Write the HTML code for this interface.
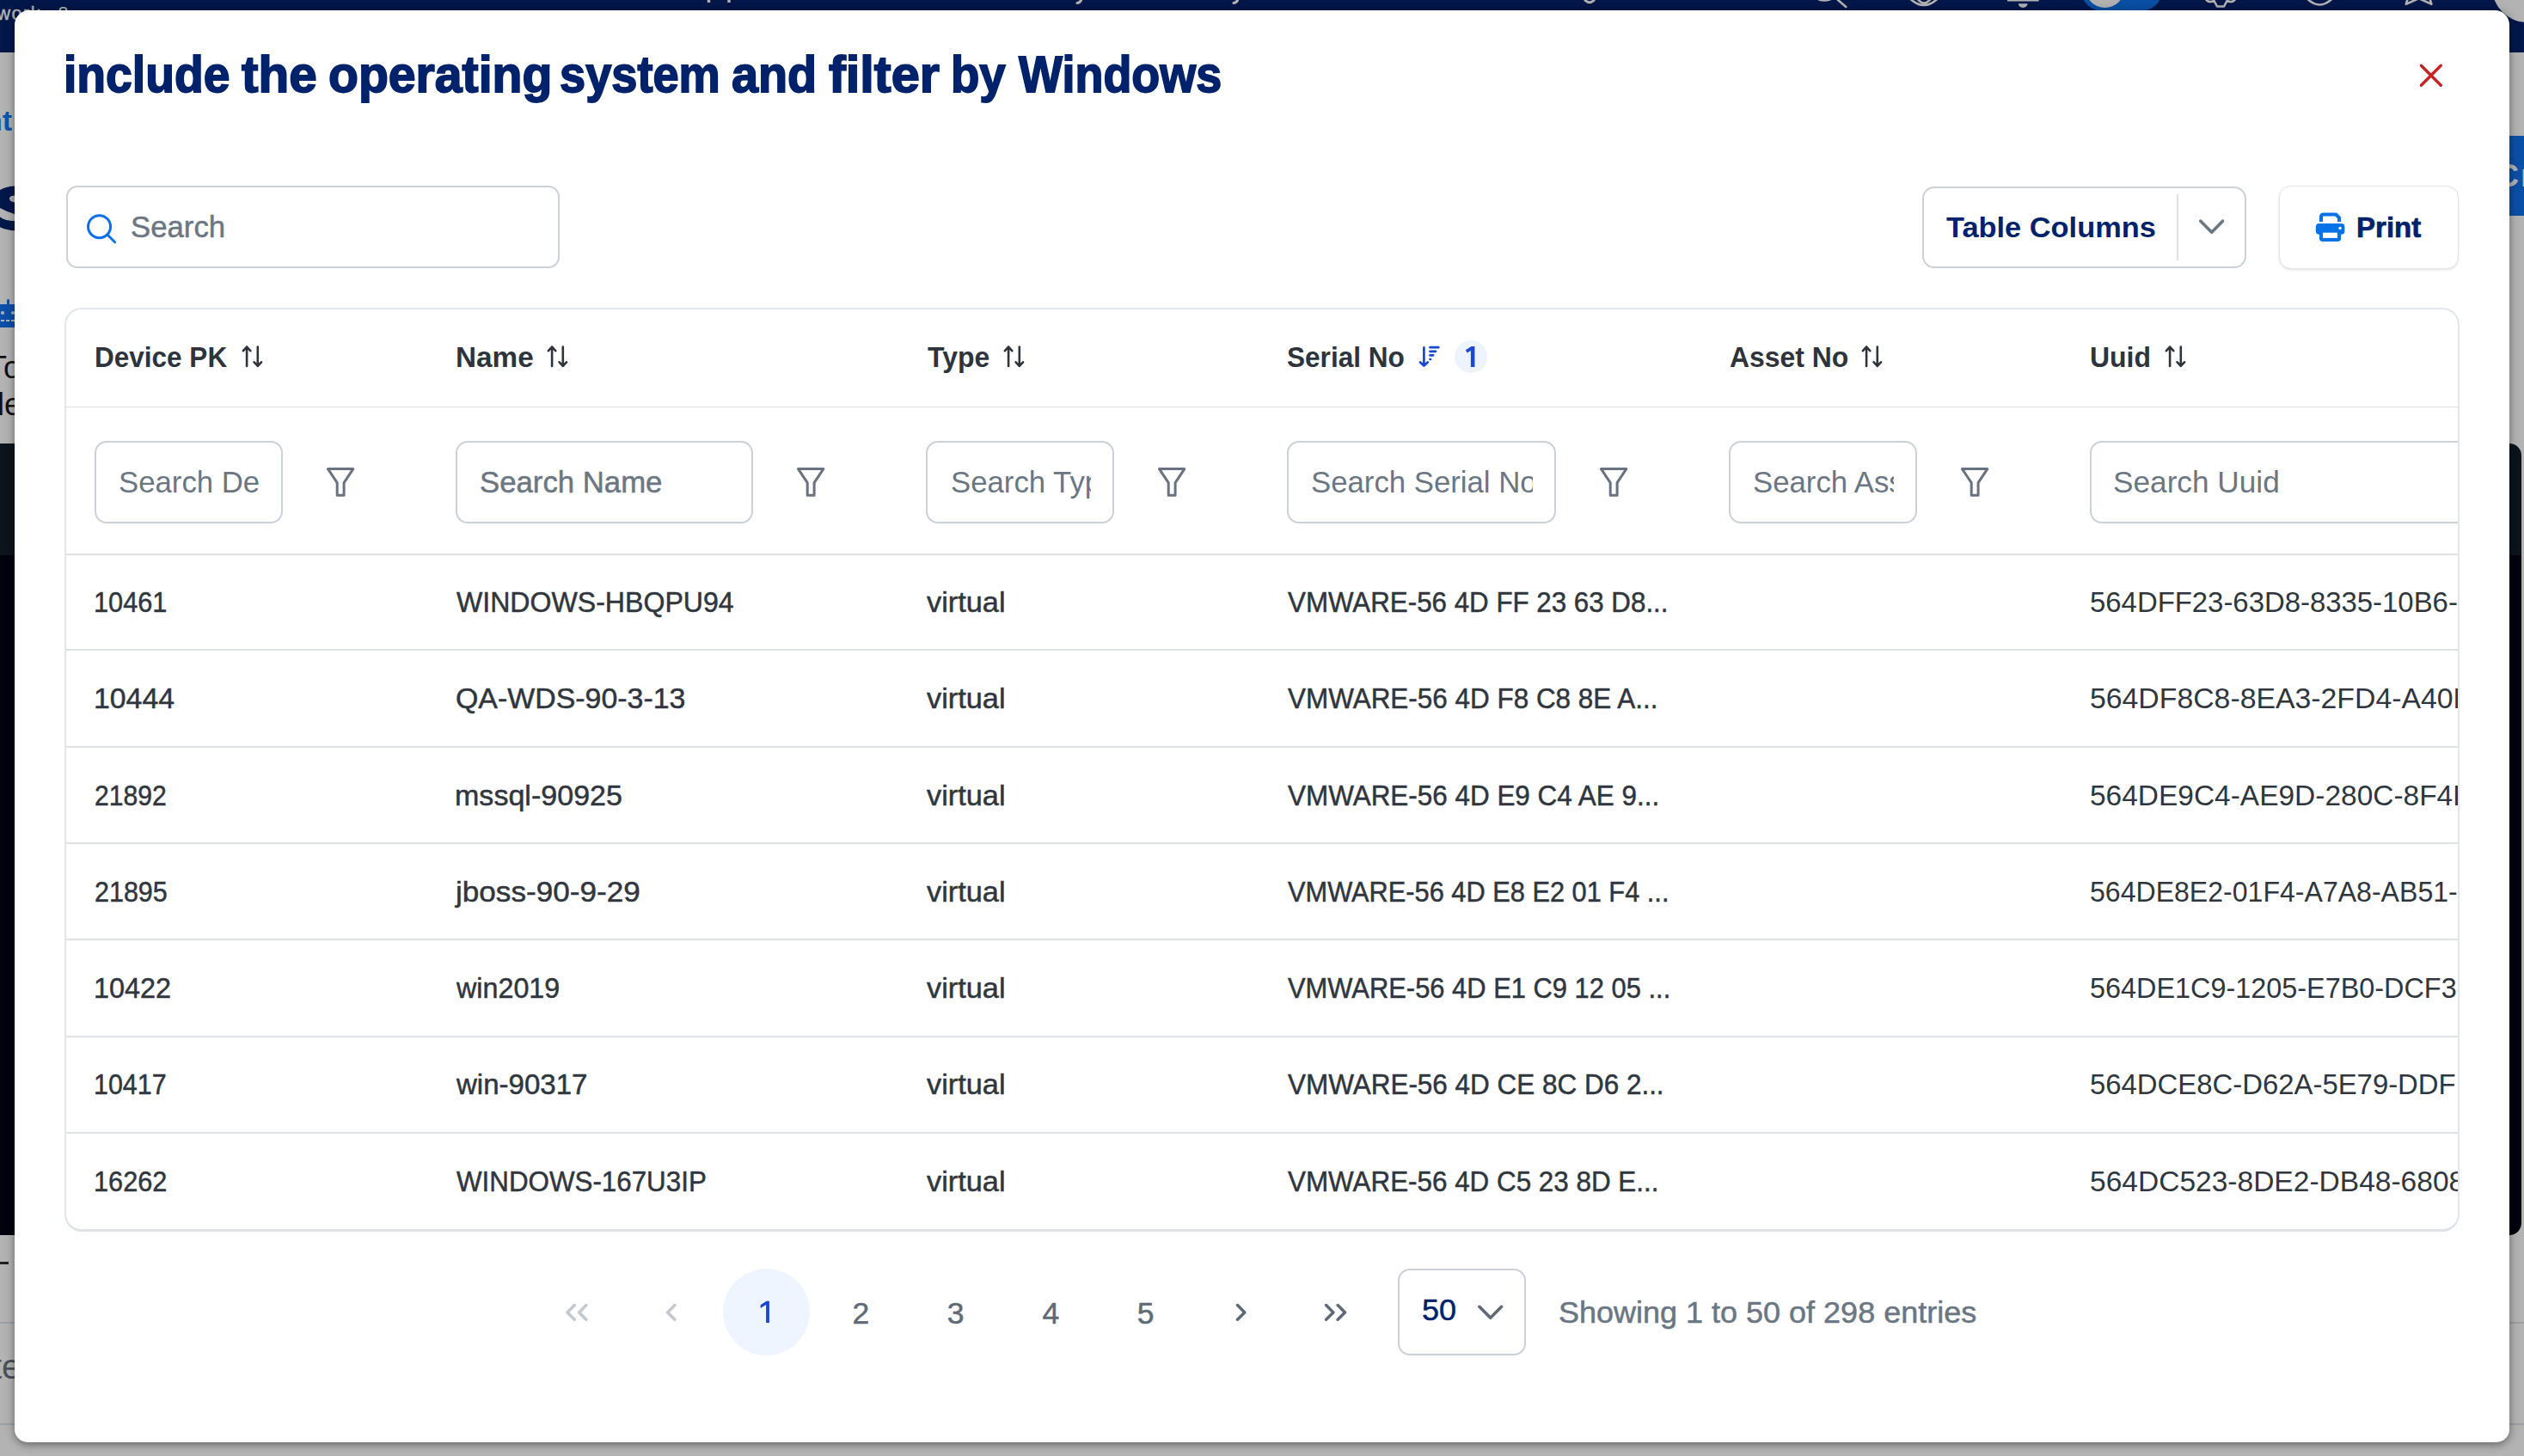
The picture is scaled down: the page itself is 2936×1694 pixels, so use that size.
<!DOCTYPE html>
<html lang="en"><head><meta charset="utf-8"><title>Devices</title>
<style>
html,body{margin:0;padding:0;overflow:hidden}
html{width:2936px;height:1694px}
#root{position:absolute;left:0;top:0;width:2936px;height:1694px;overflow:hidden}
body{width:2936px;height:1694px;position:relative;overflow:hidden;background:#b3b3b3;font-family:'Liberation Sans',sans-serif;}
div,span,svg{box-sizing:border-box}
</style></head>
<body>
<div id="root">
<div style="position:absolute;left:0px;top:0px;width:2936px;height:61px;background:#03184a"></div>
<svg style="position:absolute;left:0;top:0" width="2936" height="24" viewBox="0 0 2936 24" fill="none" stroke="#b3b3b3" stroke-width="2.6" stroke-linecap="round" stroke-linejoin="round">
<path d="M824.5 -1v4 M848 -1v4" stroke-width="3.4" stroke-linecap="butt"/>
<path d="M1258 -1 q-1 4 -5 4.5 M1440 -1 q-1 4 -5 4.5" stroke-width="3"/>
<path d="M1844 0.5 q5 4.5 10 0" stroke-width="3"/>
<path d="M2116 -0.5 q6 2 12.5 0 M2138 0 L2147.3 8"/>
<path d="M2222.4 -1 Q2238 13 2253.3 -1 M2230.7 -1 Q2238 8 2245.6 -1"/>
<path d="M2335 0.2 H2371.6" stroke-width="2.6" stroke-linecap="butt"/>
<path d="M2347.8 4.2 A5.35 4.7 0 0 0 2358.5 4.2 Z" fill="#b3b3b3" stroke="none"/>
<path d="M2566 -1 q2 3.5 6 3 l3.5 -1 l3.5 6.5 h8 l3.5 -6.5 l3.5 1 q4 .5 6 -3"/>
<path d="M2682.4 -3 Q2698.3 14 2714.3 -3"/>
<path d="M2800.8 -2 L2798.8 4.8 L2813.6 -1.8 L2828.4 4.8 L2826.4 -2"/>
</svg>
<span style="position:absolute;left:-3.5px;top:6.2px;-webkit-text-stroke:0.5px #b3b3b3;font-size:21.5px;line-height:21.5px;color:#b3b3b3;white-space:pre;letter-spacing:1.5px">work</span>
<span style="position:absolute;left:67.5px;top:6.2px;font-size:21.5px;line-height:21.5px;color:#b3b3b3;white-space:pre">8</span>
<div style="position:absolute;left:2420px;top:-40.5px;width:96px;height:53px;background:#0a50a6;border-radius:26.5px"></div>
<div style="position:absolute;left:2425.5px;top:-37.1px;width:45.6px;height:45.6px;background:#b3b3b3;border-radius:22.8px"></div>
<div style="position:absolute;left:2899.4px;top:-55.6px;width:81.2px;height:81.2px;background:#b3b3b3;border-radius:40.6px"></div>
<span style="position:absolute;left:-18px;top:123px;font-size:34px;line-height:34px;font-weight:700;color:#0c55b0;white-space:pre">nt</span>
<svg style="position:absolute;left:0;top:210px" width="17" height="64" viewBox="0 210 17 64"><path fill="#03184a" d="M0 221 Q8 216.4 17 216.4 L17 227.5 Q11 227.5 11 231 Q11 234.5 17 235.5 L17 248.9 Q7 246 0 242 Z"/><path fill="#03184a" d="M0 252.6 Q8 258 17 256.9 L17 268.3 Q8 268 0 264.3 Z"/></svg>
<div style="position:absolute;left:0px;top:354px;width:17px;height:27px;background:#0c4fa8"></div>
<div style="position:absolute;left:8px;top:348px;width:3px;height:7px;background:#0c4fa8;border-radius:1.5px"></div>
<div style="position:absolute;left:1px;top:362px;width:4px;height:4px;background:#b3b3b3;border-radius:2px"></div>
<div style="position:absolute;left:13px;top:362px;width:4px;height:4px;background:#b3b3b3;border-radius:2px"></div>
<div style="position:absolute;left:1px;top:372px;width:16px;height:2px;background:repeating-linear-gradient(90deg,#b3b3b3 0 4px,transparent 4px 6px)"></div>
<span style="position:absolute;left:-14px;top:410px;font-size:36px;line-height:36px;color:#111;white-space:pre">To</span>
<span style="position:absolute;left:-15px;top:453px;font-size:36px;line-height:36px;color:#111;white-space:pre">de</span>
<div style="position:absolute;left:0px;top:516px;width:30px;height:130px;background:#0c141c"></div>
<div style="position:absolute;left:0px;top:646px;width:30px;height:791px;background:#03030f"></div>
<div style="position:absolute;left:0px;top:1468px;width:10px;height:3px;background:#222"></div>
<div style="position:absolute;left:0px;top:1538px;width:30px;height:2px;background:#9aa0a6"></div>
<div style="position:absolute;left:0px;top:1656px;width:30px;height:2px;background:#9aa0a6"></div>
<span style="position:absolute;left:-9px;top:1570px;font-size:40px;line-height:40px;color:#4a525b;white-space:pre">te</span>
<div style="position:absolute;left:2900px;top:158px;width:40px;height:93px;background:#0a50a6"></div>
<span style="position:absolute;left:2904px;top:187px;font-size:36px;line-height:36px;font-weight:700;letter-spacing:2px;color:#b3b3b3;white-space:pre">Cr</span>
<div style="position:absolute;left:2900px;top:516px;width:33px;height:130px;background:#0c141c;border-top-right-radius:14px"></div>
<div style="position:absolute;left:2900px;top:646px;width:33px;height:791px;background:#03030f;border-bottom-right-radius:14px"></div>
<div style="position:absolute;left:2919px;top:1538px;width:20px;height:2px;background:#9aa0a6"></div>
<div style="position:absolute;left:2919px;top:1656px;width:20px;height:2px;background:#9aa0a6"></div>
<div style="position:absolute;left:17px;top:12px;width:2902px;height:1666px;background:#fff;border-radius:17px 17px 15px 15px;box-shadow:0 3px 9px rgba(0,0,0,.34),0 0 16px rgba(0,0,0,.14)"></div>
<svg style="position:absolute;left:2808px;top:68px" width="40" height="40" viewBox="2808 68 40 40" fill="none" stroke="#c92222" stroke-width="3.4" stroke-linecap="round"><path d="M2816.4 76.3 L2839.3 99.2 M2839.3 76.3 L2816.4 99.2"/></svg>
<div style="position:absolute;left:77px;top:216px;width:574px;height:96px;border:2px solid #cad1d9;border-radius:13px;background:#fff"></div>
<svg style="position:absolute;left:96px;top:244px" width="44" height="44" viewBox="96 244 44 44" fill="none" stroke="#0a6fe8" stroke-width="3" stroke-linecap="round"><circle cx="115.55" cy="263.7" r="13"/><path d="M125.2 273.3 L133.6 281.7"/></svg>
<div style="position:absolute;left:2236px;top:217px;width:377px;height:94.5px;border:2px solid #cad1d9;border-radius:14px;background:#fff"></div>
<div style="position:absolute;left:2532px;top:226px;width:2px;height:77px;background:#dce0e7"></div>
<svg style="position:absolute;left:2550px;top:248px" width="46" height="32" viewBox="2550 248 46 32" fill="none" stroke="#6b7683" stroke-width="3.6" stroke-linecap="round" stroke-linejoin="round"><path d="M2559.8 257.2 L2572.7 270.3 L2585.5 257.2"/></svg>
<div style="position:absolute;left:2651px;top:216px;width:209px;height:97px;border:1.5px solid #e3e5e9;border-radius:14px;background:#fff;box-shadow:0 1px 3px rgba(0,0,0,.12)"></div>
<svg style="position:absolute;left:2690px;top:244px" width="42" height="42" viewBox="2690 244 42 42">
<path d="M2699.95 258 V252.6 Q2699.95 249.45 2703.1 249.45 H2717.2 L2721.05 253.4 V258" fill="none" stroke="#0672e8" stroke-width="4.1" stroke-linejoin="round"/>
<rect x="2693.8" y="260" width="33.6" height="12.8" rx="4" fill="#0672e8"/>
<path d="M2697.9 268 H2723.1 V277 a4 4 0 0 1 -4 4 H2701.9 a4 4 0 0 1 -4 -4 Z" fill="#0672e8"/>
<rect x="2702" y="270.7" width="16.9" height="6.2" fill="#fff"/>
<circle cx="2722" cy="265.5" r="1.7" fill="#fff"/>
</svg>
<div style="position:absolute;left:75px;top:358px;width:2786px;height:1075px;border:2px solid #e2e5ea;border-bottom:3px solid #dfe3e7;border-radius:20px;background:#fff"></div>
<div style="position:absolute;left:77px;top:473px;width:2782px;height:1px;background:#dde1e7"></div>
<div style="position:absolute;left:77px;top:644px;width:2782px;height:2px;background:#dfe3e8"></div>
<div style="position:absolute;left:77px;top:755px;width:2782px;height:2px;background:#dfe3e8"></div>
<div style="position:absolute;left:77px;top:868px;width:2782px;height:2px;background:#dfe3e8"></div>
<div style="position:absolute;left:77px;top:980px;width:2782px;height:2px;background:#dfe3e8"></div>
<div style="position:absolute;left:77px;top:1092px;width:2782px;height:2px;background:#dfe3e8"></div>
<div style="position:absolute;left:77px;top:1205px;width:2782px;height:2px;background:#dfe3e8"></div>
<div style="position:absolute;left:77px;top:1317px;width:2782px;height:2px;background:#dfe3e8"></div>
<svg style="position:absolute;left:277.6px;top:396px" width="32" height="38" viewBox="277.6 396 32 38" fill="none" stroke="#2e343c" stroke-width="2.6" stroke-linecap="round" stroke-linejoin="round"><path d="M286.7 425.9 V403.6 M282.5 408.20000000000005 L286.7 403.6 L290.9 408.20000000000005"/><path d="M299.4 403.6 V425.9 M295.2 421.29999999999995 L299.4 425.9 L303.6 421.29999999999995"/></svg>
<svg style="position:absolute;left:633.0px;top:396px" width="32" height="38" viewBox="633.0 396 32 38" fill="none" stroke="#2e343c" stroke-width="2.6" stroke-linecap="round" stroke-linejoin="round"><path d="M642.1 425.9 V403.6 M637.9 408.20000000000005 L642.1 403.6 L646.3 408.20000000000005"/><path d="M654.8 403.6 V425.9 M650.6 421.29999999999995 L654.8 425.9 L659.0 421.29999999999995"/></svg>
<svg style="position:absolute;left:1163.6px;top:396px" width="32" height="38" viewBox="1163.6 396 32 38" fill="none" stroke="#2e343c" stroke-width="2.6" stroke-linecap="round" stroke-linejoin="round"><path d="M1172.7 425.9 V403.6 M1168.5 408.20000000000005 L1172.7 403.6 L1176.9 408.20000000000005"/><path d="M1185.4 403.6 V425.9 M1181.2 421.29999999999995 L1185.4 425.9 L1189.6 421.29999999999995"/></svg>
<svg style="position:absolute;left:2162.0px;top:396px" width="32" height="38" viewBox="2162.0 396 32 38" fill="none" stroke="#2e343c" stroke-width="2.6" stroke-linecap="round" stroke-linejoin="round"><path d="M2171.1 425.9 V403.6 M2166.9 408.20000000000005 L2171.1 403.6 L2175.3 408.20000000000005"/><path d="M2183.8 403.6 V425.9 M2179.6 421.29999999999995 L2183.8 425.9 L2188.0 421.29999999999995"/></svg>
<svg style="position:absolute;left:2514.5px;top:396px" width="32" height="38" viewBox="2514.5 396 32 38" fill="none" stroke="#2e343c" stroke-width="2.6" stroke-linecap="round" stroke-linejoin="round"><path d="M2523.6 425.9 V403.6 M2519.4 408.20000000000005 L2523.6 403.6 L2527.8 408.20000000000005"/><path d="M2536.3 403.6 V425.9 M2532.1 421.29999999999995 L2536.3 425.9 L2540.5 421.29999999999995"/></svg>
<svg style="position:absolute;left:1646px;top:396px" width="36" height="38" viewBox="1646 396 36 38" fill="none" stroke="#1746d9" stroke-width="2.7" stroke-linecap="round" stroke-linejoin="round">
<path d="M1656.4 404.4 V425.3 M1652 421.4 L1656.4 425.6 L1660.8 421.4"/>
<path d="M1663.5 404.2 H1673.3 M1663.5 408.8 H1670 M1663.5 413.3 H1667.1 M1663.5 418 H1664"/></svg>
<div style="position:absolute;left:1692px;top:396px;width:38px;height:38px;background:#edf4fe;border-radius:19px"></div>
<svg style="position:absolute;left:1700px;top:400px" width="20" height="30" viewBox="1700 400 20 30"><path fill="#1b49d6" d="M1715.4 403.1 L1711.4 403.1 L1704.9 407.2 L1706.6 410.6 L1710.9 408 L1710.9 427 L1715.4 427 Z"/></svg>
<div style="position:absolute;left:110px;top:513px;width:219px;height:95.6px;border:2px solid #cad1d9;border-radius:14px;background:#fff"></div>
<div style="position:absolute;left:530.4px;top:513px;width:345.3px;height:95.6px;border:2px solid #cad1d9;border-radius:14px;background:#fff"></div>
<div style="position:absolute;left:1077.1px;top:513px;width:219px;height:95.6px;border:2px solid #cad1d9;border-radius:14px;background:#fff"></div>
<div style="position:absolute;left:1497.3px;top:513px;width:312.4px;height:95.6px;border:2px solid #cad1d9;border-radius:14px;background:#fff"></div>
<div style="position:absolute;left:2010.8px;top:513px;width:219px;height:95.6px;border:2px solid #cad1d9;border-radius:14px;background:#fff"></div>
<div style="position:absolute;left:2400px;top:505px;width:459px;height:112px;overflow:hidden"><div style="position:absolute;left:31.4px;top:8px;width:600px;height:95.6px;border:2px solid #cad1d9;border-radius:14px;background:#fff"></div></div>
<svg style="position:absolute;left:377.6px;top:541.7px" width="38" height="40" viewBox="-2 -2 38 40" fill="none" stroke="#687280" stroke-width="3" stroke-linejoin="round"><path d="M1.5 1.6 H30.8 L20.1 17.6 V32.2 H12.2 V17.6 Z"/></svg>
<svg style="position:absolute;left:924.8px;top:541.7px" width="38" height="40" viewBox="-2 -2 38 40" fill="none" stroke="#687280" stroke-width="3" stroke-linejoin="round"><path d="M1.5 1.6 H30.8 L20.1 17.6 V32.2 H12.2 V17.6 Z"/></svg>
<svg style="position:absolute;left:1344.7px;top:541.7px" width="38" height="40" viewBox="-2 -2 38 40" fill="none" stroke="#687280" stroke-width="3" stroke-linejoin="round"><path d="M1.5 1.6 H30.8 L20.1 17.6 V32.2 H12.2 V17.6 Z"/></svg>
<svg style="position:absolute;left:1859.0px;top:541.7px" width="38" height="40" viewBox="-2 -2 38 40" fill="none" stroke="#687280" stroke-width="3" stroke-linejoin="round"><path d="M1.5 1.6 H30.8 L20.1 17.6 V32.2 H12.2 V17.6 Z"/></svg>
<svg style="position:absolute;left:2279.0px;top:541.7px" width="38" height="40" viewBox="-2 -2 38 40" fill="none" stroke="#687280" stroke-width="3" stroke-linejoin="round"><path d="M1.5 1.6 H30.8 L20.1 17.6 V32.2 H12.2 V17.6 Z"/></svg>
<svg style="position:absolute;left:640px;top:1500px" width="1000" height="54" viewBox="640 1500 1000 54" fill="none" stroke-width="3.5" stroke-linecap="round" stroke-linejoin="round"><path stroke="#c3c8cc" d="M668.3 1518.6 L660.0 1526.9 L668.3 1535.2 M681.9 1518.6 L673.6 1526.9 L681.9 1535.2 M784.9 1518.6 L776.6 1526.9 L784.9 1535.2"/><path stroke="#5f6a77" d="M1439.5 1518.6 L1447.8 1526.9 L1439.5 1535.2 M1542.6 1518.6 L1550.9 1526.9 L1542.6 1535.2 M1556.2 1518.6 L1564.5 1526.9 L1556.2 1535.2"/></svg>
<div style="position:absolute;left:841px;top:1476px;width:101px;height:101px;background:#eff5fe;border-radius:50.5px"></div>
<svg style="position:absolute;left:880px;top:1510px" width="20" height="32" viewBox="880 1510 20 32"><path fill="#1847d6" d="M894.9 1513.7 L891.6 1513.7 L884.7 1518.3 L884.7 1522 L891.1 1517.9 L891.1 1538.9 L894.9 1538.9 Z"/></svg>
<div style="position:absolute;left:1626px;top:1476px;width:149px;height:101px;border:2px solid #cad1d9;border-radius:14px;background:#fff"></div>
<svg style="position:absolute;left:1712px;top:1510px" width="44" height="34" viewBox="1712 1510 44 34" fill="none" stroke="#5f6a77" stroke-width="3.6" stroke-linecap="round" stroke-linejoin="round"><path d="M1720.9 1520.3 L1733.75 1533.2 L1746.6 1520.3"/></svg>
<span style="-webkit-text-stroke:1.8px #00226b;position:absolute;left:74.16px;top:56.70px;font-size:59.5px;line-height:59.5px;font-weight:700;color:#00226b;white-space:pre;transform-origin:0 0;transform:scaleX(0.9287)">include</span>
<span style="-webkit-text-stroke:1.8px #00226b;position:absolute;left:281.18px;top:56.70px;font-size:59.5px;line-height:59.5px;font-weight:700;color:#00226b;white-space:pre;transform-origin:0 0;transform:scaleX(0.9819)">the</span>
<span style="-webkit-text-stroke:1.8px #00226b;position:absolute;left:381.71px;top:56.70px;font-size:59.5px;line-height:59.5px;font-weight:700;color:#00226b;white-space:pre;transform-origin:0 0;transform:scaleX(0.9604)">operating</span>
<span style="-webkit-text-stroke:1.8px #00226b;position:absolute;left:651.26px;top:56.70px;font-size:59.5px;line-height:59.5px;font-weight:700;color:#00226b;white-space:pre;transform-origin:0 0;transform:scaleX(0.9104)">system</span>
<span style="-webkit-text-stroke:1.8px #00226b;position:absolute;left:851.37px;top:56.70px;font-size:59.5px;line-height:59.5px;font-weight:700;color:#00226b;white-space:pre;transform-origin:0 0;transform:scaleX(0.9379)">and</span>
<span style="-webkit-text-stroke:1.8px #00226b;position:absolute;left:963.77px;top:56.70px;font-size:59.5px;line-height:59.5px;font-weight:700;color:#00226b;white-space:pre;transform-origin:0 0;transform:scaleX(0.9996)">filter</span>
<span style="-webkit-text-stroke:1.8px #00226b;position:absolute;left:1105.95px;top:56.70px;font-size:59.5px;line-height:59.5px;font-weight:700;color:#00226b;white-space:pre;transform-origin:0 0;transform:scaleX(0.9176)">by</span>
<span style="-webkit-text-stroke:1.8px #00226b;position:absolute;left:1184.96px;top:56.70px;font-size:59.5px;line-height:59.5px;font-weight:700;color:#00226b;white-space:pre;transform-origin:0 0;transform:scaleX(0.9067)">Windows</span>
<span style="-webkit-text-stroke:0.5px #6b7683;position:absolute;left:151.91px;top:246.20px;font-size:35px;line-height:35px;font-weight:400;color:#6b7683;white-space:pre;transform-origin:0 0;transform:scaleX(0.9930)">Search</span>
<span style="position:absolute;left:2263.81px;top:247.60px;font-size:33.6px;line-height:33.6px;font-weight:700;color:#00226b;white-space:pre;transform-origin:0 0;transform:scaleX(1.0237)">Table Columns</span>
<span style="-webkit-text-stroke:0.7px #00226b;position:absolute;left:2741.21px;top:247.60px;font-size:33.6px;line-height:33.6px;font-weight:700;color:#00226b;white-space:pre;transform-origin:0 0;transform:scaleX(0.9842)">Print</span>
<span style="position:absolute;left:110.16px;top:398.80px;font-size:33.6px;line-height:33.6px;font-weight:700;color:#2e343c;white-space:pre;transform-origin:0 0;transform:scaleX(0.9385)">Device PK</span>
<span style="position:absolute;left:529.85px;top:398.80px;font-size:33.6px;line-height:33.6px;font-weight:700;color:#2e343c;white-space:pre;transform-origin:0 0;transform:scaleX(0.9914)">Name</span>
<span style="position:absolute;left:1078.51px;top:398.80px;font-size:33.6px;line-height:33.6px;font-weight:700;color:#2e343c;white-space:pre;transform-origin:0 0;transform:scaleX(0.9525)">Type</span>
<span style="position:absolute;left:1497.40px;top:398.80px;font-size:33.6px;line-height:33.6px;font-weight:700;color:#2e343c;white-space:pre;transform-origin:0 0;transform:scaleX(0.9398)">Serial No</span>
<span style="position:absolute;left:2011.85px;top:398.80px;font-size:33.6px;line-height:33.6px;font-weight:700;color:#2e343c;white-space:pre;transform-origin:0 0;transform:scaleX(0.9505)">Asset No</span>
<span style="position:absolute;left:2430.69px;top:398.80px;font-size:33.6px;line-height:33.6px;font-weight:700;color:#2e343c;white-space:pre;transform-origin:0 0;transform:scaleX(0.9509)">Uuid</span>
<div style="position:absolute;left:110px;top:532.90px;width:191.60000000000002px;height:55px;overflow:hidden"><span style="position:absolute;left:27.81px;top:10px;font-size:35px;line-height:35px;font-weight:400;color:#6b7683;white-space:pre;transform-origin:0 0;transform:scaleX(0.9927)">Search Device PK</span></div>
<span style="-webkit-text-stroke:0.5px #6b7683;position:absolute;left:557.81px;top:542.90px;font-size:35px;line-height:35px;font-weight:400;color:#6b7683;white-space:pre;transform-origin:0 0;transform:scaleX(0.9927)">Search Name</span>
<div style="position:absolute;left:1078px;top:532.90px;width:190.79999999999995px;height:55px;overflow:hidden"><span style="position:absolute;left:27.51px;top:10px;font-size:35px;line-height:35px;font-weight:400;color:#6b7683;white-space:pre;transform-origin:0 0;transform:scaleX(0.9927)">Search Type</span></div>
<div style="position:absolute;left:1498px;top:532.90px;width:284.5px;height:55px;overflow:hidden"><span style="position:absolute;left:26.91px;top:10px;font-size:35px;line-height:35px;font-weight:400;color:#6b7683;white-space:pre;transform-origin:0 0;transform:scaleX(0.9927)">Search Serial No</span></div>
<div style="position:absolute;left:2012px;top:532.90px;width:190.5999999999999px;height:55px;overflow:hidden"><span style="position:absolute;left:26.71px;top:10px;font-size:35px;line-height:35px;font-weight:400;color:#6b7683;white-space:pre;transform-origin:0 0;transform:scaleX(0.9927)">Search Asset No</span></div>
<div style="position:absolute;left:2432px;top:532.90px;width:427px;height:55px;overflow:hidden"><span style="position:absolute;left:26.30px;top:10px;font-size:35px;line-height:35px;font-weight:400;color:#6b7683;white-space:pre;transform-origin:0 0;transform:scaleX(1.0060)">Search Uuid</span></div>
<span style="-webkit-text-stroke:0.5px #30363e;position:absolute;left:109.39px;top:683.90px;font-size:33.4px;line-height:33.4px;font-weight:400;color:#30363e;white-space:pre;transform-origin:0 0;transform:scaleX(0.9196)">10461</span>
<span style="-webkit-text-stroke:0.5px #30363e;position:absolute;left:531.11px;top:683.90px;font-size:33.4px;line-height:33.4px;font-weight:400;color:#30363e;white-space:pre;transform-origin:0 0;transform:scaleX(0.9609)">WINDOWS-HBQPU94</span>
<span style="-webkit-text-stroke:0.5px #30363e;position:absolute;left:1077.82px;top:683.90px;font-size:33.4px;line-height:33.4px;font-weight:400;color:#30363e;white-space:pre;transform-origin:0 0;transform:scaleX(1.0276)">virtual</span>
<span style="-webkit-text-stroke:0.5px #30363e;position:absolute;left:1498.39px;top:683.90px;font-size:33.4px;line-height:33.4px;font-weight:400;color:#30363e;white-space:pre;transform-origin:0 0;transform:scaleX(0.9376)">VMWARE-56 4D FF 23 63 D8...</span>
<div style="position:absolute;left:2400px;top:673.90px;width:459px;height:53.4px;overflow:hidden"><span style="position:absolute;left:31.46px;top:10px;font-size:33.4px;line-height:33.4px;font-weight:400;color:#30363e;white-space:pre;transform-origin:0 0;transform:scaleX(0.9851)">564DFF23-63D8-8335-10B6-7C2A1B3E9F40</span></div>
<span style="-webkit-text-stroke:0.5px #30363e;position:absolute;left:109.21px;top:796.20px;font-size:33.4px;line-height:33.4px;font-weight:400;color:#30363e;white-space:pre;transform-origin:0 0;transform:scaleX(1.0120)">10444</span>
<span style="-webkit-text-stroke:0.5px #30363e;position:absolute;left:530.00px;top:796.20px;font-size:33.4px;line-height:33.4px;font-weight:400;color:#30363e;white-space:pre;transform-origin:0 0;transform:scaleX(1.0147)">QA-WDS-90-3-13</span>
<span style="-webkit-text-stroke:0.5px #30363e;position:absolute;left:1077.82px;top:796.20px;font-size:33.4px;line-height:33.4px;font-weight:400;color:#30363e;white-space:pre;transform-origin:0 0;transform:scaleX(1.0276)">virtual</span>
<span style="-webkit-text-stroke:0.5px #30363e;position:absolute;left:1498.39px;top:796.20px;font-size:33.4px;line-height:33.4px;font-weight:400;color:#30363e;white-space:pre;transform-origin:0 0;transform:scaleX(0.9417)">VMWARE-56 4D F8 C8 8E A...</span>
<div style="position:absolute;left:2400px;top:786.20px;width:459px;height:53.4px;overflow:hidden"><span style="position:absolute;left:31.43px;top:10px;font-size:33.4px;line-height:33.4px;font-weight:400;color:#30363e;white-space:pre;transform-origin:0 0;transform:scaleX(1.0119)">564DF8C8-8EA3-2FD4-A40E-91B2C3D4E5F6</span></div>
<span style="-webkit-text-stroke:0.5px #30363e;position:absolute;left:110.31px;top:908.50px;font-size:33.4px;line-height:33.4px;font-weight:400;color:#30363e;white-space:pre;transform-origin:0 0;transform:scaleX(0.9020)">21892</span>
<span style="-webkit-text-stroke:0.5px #30363e;position:absolute;left:529.08px;top:908.50px;font-size:33.4px;line-height:33.4px;font-weight:400;color:#30363e;white-space:pre;transform-origin:0 0;transform:scaleX(1.0199)">mssql-90925</span>
<span style="-webkit-text-stroke:0.5px #30363e;position:absolute;left:1077.82px;top:908.50px;font-size:33.4px;line-height:33.4px;font-weight:400;color:#30363e;white-space:pre;transform-origin:0 0;transform:scaleX(1.0276)">virtual</span>
<span style="-webkit-text-stroke:0.5px #30363e;position:absolute;left:1498.39px;top:908.50px;font-size:33.4px;line-height:33.4px;font-weight:400;color:#30363e;white-space:pre;transform-origin:0 0;transform:scaleX(0.9415)">VMWARE-56 4D E9 C4 AE 9...</span>
<div style="position:absolute;left:2400px;top:898.50px;width:459px;height:53.4px;overflow:hidden"><span style="position:absolute;left:31.44px;top:10px;font-size:33.4px;line-height:33.4px;font-weight:400;color:#30363e;white-space:pre;transform-origin:0 0;transform:scaleX(1.0022)">564DE9C4-AE9D-280C-8F4D-1A2B3C4D5E6F</span></div>
<span style="-webkit-text-stroke:0.5px #30363e;position:absolute;left:110.29px;top:1020.80px;font-size:33.4px;line-height:33.4px;font-weight:400;color:#30363e;white-space:pre;transform-origin:0 0;transform:scaleX(0.9127)">21895</span>
<span style="-webkit-text-stroke:0.5px #30363e;position:absolute;left:529.81px;top:1020.80px;font-size:33.4px;line-height:33.4px;font-weight:400;color:#30363e;white-space:pre;transform-origin:0 0;transform:scaleX(1.0518)">jboss-90-9-29</span>
<span style="-webkit-text-stroke:0.5px #30363e;position:absolute;left:1077.82px;top:1020.80px;font-size:33.4px;line-height:33.4px;font-weight:400;color:#30363e;white-space:pre;transform-origin:0 0;transform:scaleX(1.0276)">virtual</span>
<span style="-webkit-text-stroke:0.5px #30363e;position:absolute;left:1498.39px;top:1020.80px;font-size:33.4px;line-height:33.4px;font-weight:400;color:#30363e;white-space:pre;transform-origin:0 0;transform:scaleX(0.9215)">VMWARE-56 4D E8 E2 01 F4 ...</span>
<div style="position:absolute;left:2400px;top:1010.80px;width:459px;height:53.4px;overflow:hidden"><span style="position:absolute;left:31.48px;top:10px;font-size:33.4px;line-height:33.4px;font-weight:400;color:#30363e;white-space:pre;transform-origin:0 0;transform:scaleX(0.9602)">564DE8E2-01F4-A7A8-AB51-0F1E2D3C4B5A</span></div>
<span style="-webkit-text-stroke:0.5px #30363e;position:absolute;left:109.30px;top:1133.10px;font-size:33.4px;line-height:33.4px;font-weight:400;color:#30363e;white-space:pre;transform-origin:0 0;transform:scaleX(0.9695)">10422</span>
<span style="-webkit-text-stroke:0.5px #30363e;position:absolute;left:531.23px;top:1133.10px;font-size:33.4px;line-height:33.4px;font-weight:400;color:#30363e;white-space:pre;transform-origin:0 0;transform:scaleX(0.9667)">win2019</span>
<span style="-webkit-text-stroke:0.5px #30363e;position:absolute;left:1077.82px;top:1133.10px;font-size:33.4px;line-height:33.4px;font-weight:400;color:#30363e;white-space:pre;transform-origin:0 0;transform:scaleX(1.0276)">virtual</span>
<span style="-webkit-text-stroke:0.5px #30363e;position:absolute;left:1498.39px;top:1133.10px;font-size:33.4px;line-height:33.4px;font-weight:400;color:#30363e;white-space:pre;transform-origin:0 0;transform:scaleX(0.9251)">VMWARE-56 4D E1 C9 12 05 ...</span>
<div style="position:absolute;left:2400px;top:1123.10px;width:459px;height:53.4px;overflow:hidden"><span style="position:absolute;left:31.47px;top:10px;font-size:33.4px;line-height:33.4px;font-weight:400;color:#30363e;white-space:pre;transform-origin:0 0;transform:scaleX(0.9700)">564DE1C9-1205-E7B0-DCF3-5A6B7C8D9E0F</span></div>
<span style="-webkit-text-stroke:0.5px #30363e;position:absolute;left:109.41px;top:1245.40px;font-size:33.4px;line-height:33.4px;font-weight:400;color:#30363e;white-space:pre;transform-origin:0 0;transform:scaleX(0.9118)">10417</span>
<span style="-webkit-text-stroke:0.5px #30363e;position:absolute;left:531.24px;top:1245.40px;font-size:33.4px;line-height:33.4px;font-weight:400;color:#30363e;white-space:pre;transform-origin:0 0;transform:scaleX(0.9897)">win-90317</span>
<span style="-webkit-text-stroke:0.5px #30363e;position:absolute;left:1077.82px;top:1245.40px;font-size:33.4px;line-height:33.4px;font-weight:400;color:#30363e;white-space:pre;transform-origin:0 0;transform:scaleX(1.0276)">virtual</span>
<span style="-webkit-text-stroke:0.5px #30363e;position:absolute;left:1498.39px;top:1245.40px;font-size:33.4px;line-height:33.4px;font-weight:400;color:#30363e;white-space:pre;transform-origin:0 0;transform:scaleX(0.9421)">VMWARE-56 4D CE 8C D6 2...</span>
<div style="position:absolute;left:2400px;top:1235.40px;width:459px;height:53.4px;overflow:hidden"><span style="position:absolute;left:31.46px;top:10px;font-size:33.4px;line-height:33.4px;font-weight:400;color:#30363e;white-space:pre;transform-origin:0 0;transform:scaleX(0.9845)">564DCE8C-D62A-5E79-DDF1-2B3C4D5E6F70</span></div>
<span style="-webkit-text-stroke:0.5px #30363e;position:absolute;left:109.39px;top:1357.70px;font-size:33.4px;line-height:33.4px;font-weight:400;color:#30363e;white-space:pre;transform-origin:0 0;transform:scaleX(0.9196)">16262</span>
<span style="-webkit-text-stroke:0.5px #30363e;position:absolute;left:531.11px;top:1357.70px;font-size:33.4px;line-height:33.4px;font-weight:400;color:#30363e;white-space:pre;transform-origin:0 0;transform:scaleX(0.9385)">WINDOWS-167U3IP</span>
<span style="-webkit-text-stroke:0.5px #30363e;position:absolute;left:1077.82px;top:1357.70px;font-size:33.4px;line-height:33.4px;font-weight:400;color:#30363e;white-space:pre;transform-origin:0 0;transform:scaleX(1.0276)">virtual</span>
<span style="-webkit-text-stroke:0.5px #30363e;position:absolute;left:1498.39px;top:1357.70px;font-size:33.4px;line-height:33.4px;font-weight:400;color:#30363e;white-space:pre;transform-origin:0 0;transform:scaleX(0.9400)">VMWARE-56 4D C5 23 8D E...</span>
<div style="position:absolute;left:2400px;top:1347.70px;width:459px;height:53.4px;overflow:hidden"><span style="position:absolute;left:31.44px;top:10px;font-size:33.4px;line-height:33.4px;font-weight:400;color:#30363e;white-space:pre;transform-origin:0 0;transform:scaleX(1.0043)">564DC523-8DE2-DB48-6808-3C4D5E6F7081</span></div>
<span style="-webkit-text-stroke:0.5px #5f6a77;position:absolute;left:991.52px;top:1510.60px;font-size:35.5px;line-height:35.5px;font-weight:400;color:#5f6a77;white-space:pre;transform-origin:0 0;transform:scaleX(1.0000)">2</span>
<span style="-webkit-text-stroke:0.5px #5f6a77;position:absolute;left:1101.72px;top:1510.60px;font-size:35.5px;line-height:35.5px;font-weight:400;color:#5f6a77;white-space:pre;transform-origin:0 0;transform:scaleX(1.0000)">3</span>
<span style="-webkit-text-stroke:0.5px #5f6a77;position:absolute;left:1212.61px;top:1510.60px;font-size:35.5px;line-height:35.5px;font-weight:400;color:#5f6a77;white-space:pre;transform-origin:0 0;transform:scaleX(1.0000)">4</span>
<span style="-webkit-text-stroke:0.5px #5f6a77;position:absolute;left:1322.82px;top:1510.60px;font-size:35.5px;line-height:35.5px;font-weight:400;color:#5f6a77;white-space:pre;transform-origin:0 0;transform:scaleX(1.0000)">5</span>
<span style="-webkit-text-stroke:0.5px #00226b;position:absolute;left:1653.63px;top:1507.30px;font-size:35.5px;line-height:35.5px;font-weight:400;color:#00226b;white-space:pre;transform-origin:0 0;transform:scaleX(1.0136)">50</span>
<span style="-webkit-text-stroke:0.5px #6b7683;position:absolute;left:1812.97px;top:1510.20px;font-size:34.5px;line-height:34.5px;font-weight:400;color:#6b7683;white-space:pre;transform-origin:0 0;transform:scaleX(1.0431)">Showing 1 to 50 of 298 entries</span>
</div>
</body></html>
